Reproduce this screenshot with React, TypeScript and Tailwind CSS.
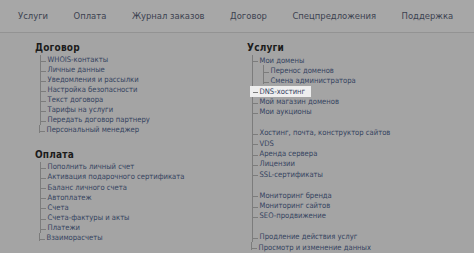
import React from 'react';

type Item = { label: string; sub?: string[]; gap?: boolean; active?: boolean };

const nav = ['Услуги', 'Оплата', 'Журнал заказов', 'Договор', 'Спецпредложения', 'Поддержка'];

const contract: Item[] = [
  { label: 'WHOIS-контакты' },
  { label: 'Личные данные' },
  { label: 'Уведомления и рассылки' },
  { label: 'Настройка безопасности' },
  { label: 'Текст договора' },
  { label: 'Тарифы на услуги' },
  { label: 'Передать договор партнеру' },
  { label: 'Персональный менеджер' },
];

const payment: Item[] = [
  { label: 'Пополнить личный счет' },
  { label: 'Активация подарочного сертификата' },
  { label: 'Баланс личного счета' },
  { label: 'Автоплатеж' },
  { label: 'Счета' },
  { label: 'Счета-фактуры и акты' },
  { label: 'Платежи' },
  { label: 'Взаиморасчеты' },
];

const services: Item[] = [
  { label: 'Мои домены', sub: ['Перенос доменов', 'Смена администратора'] },
  { label: 'DNS-хостинг', active: true },
  { label: 'Мой магазин доменов' },
  { label: 'Мои аукционы' },
  { label: 'Хостинг, почта, конструктор сайтов', gap: true },
  { label: 'VDS' },
  { label: 'Аренда сервера' },
  { label: 'Лицензии' },
  { label: 'SSL-сертификаты' },
  { label: 'Мониторинг бренда', gap: true },
  { label: 'Мониторинг сайтов' },
  { label: 'SEO-продвижение' },
  { label: 'Продление действия услуг', gap: true },
  { label: 'Просмотр и изменение данных' },
];

// one tree row: tick + link; the last row only draws the line down to its tick
function Row({ label, active, h, last }: { label: string; active?: boolean; h: string; last?: boolean }) {
  return (
    <div className={`flex items-center ${h}`}>
      {last && <span className="self-start w-px h-[8px] bg-[#7c7c7c] -ml-px" />}
      <span className={`flex items-center h-full ${active ? 'bg-[#eeeeee] -ml-[3px] pl-[3px] pr-[6px]' : ''}`}>
        <span className="w-[5px] h-px bg-[#7c7c7c] mt-[3px] mr-[2px]" />
        <span className="text-[#34435f] whitespace-nowrap">{label}</span>
      </span>
    </div>
  );
}

function Section({ title, items, h }: { title: string; items: Item[]; h: string }) {
  return (
    <div>
      <div className="font-bold text-[10px] leading-[12px] text-[#1c1c1c] tracking-[0.2px]">{title}</div>
      <div className="ml-[4.5px] mt-[1px] text-[7.6px]">
        {items.map((it, i) => {
          const last = i === items.length - 1;
          return (
            <div key={it.label} className={last ? '' : 'border-l border-[#7c7c7c]'}>
              {it.gap && <div className={`${h} ${last ? 'border-l border-[#7c7c7c] -ml-px' : ''}`} />}
              <Row label={it.label} active={it.active} h={h} last={last} />
              {it.sub && (
                <div className="ml-[10px]">
                  {it.sub.map((s, j) => {
                    const lastSub = j === it.sub!.length - 1;
                    return (
                      <div key={s} className={lastSub ? 'ml-px' : 'border-l border-[#7c7c7c]'}>
                        <Row label={s} h={h} last={lastSub} />
                      </div>
                    );
                  })}
                </div>
              )}
            </div>
          );
        })}
      </div>
    </div>
  );
}

export default function App() {
  return (
    <div className="w-[474px] h-[253px] overflow-hidden bg-[#a4a4a4] font-['DejaVu_Sans_Condensed','DejaVu_Sans',sans-serif]">
      {/* Top menu */}
      <nav className="h-[33px] flex items-center gap-[25.5px] pl-[18px] border-b border-[#939393] bg-[#a7a7a7] text-[9.4px] text-[#3c4250]">
        {nav.map((n) => (
          <span key={n} className="whitespace-nowrap">{n}</span>
        ))}
      </nav>

      <div className="flex pl-[35px] pt-[9px]">
        <div className="w-[212px] flex flex-col gap-[14px]">
          <Section title="Договор" items={contract} h="h-[10px]" />
          <Section title="Оплата" items={payment} h="h-[10.1px]" />
        </div>
        <Section title="Услуги" items={services} h="h-[10.4px]" />
      </div>
    </div>
  );
}
